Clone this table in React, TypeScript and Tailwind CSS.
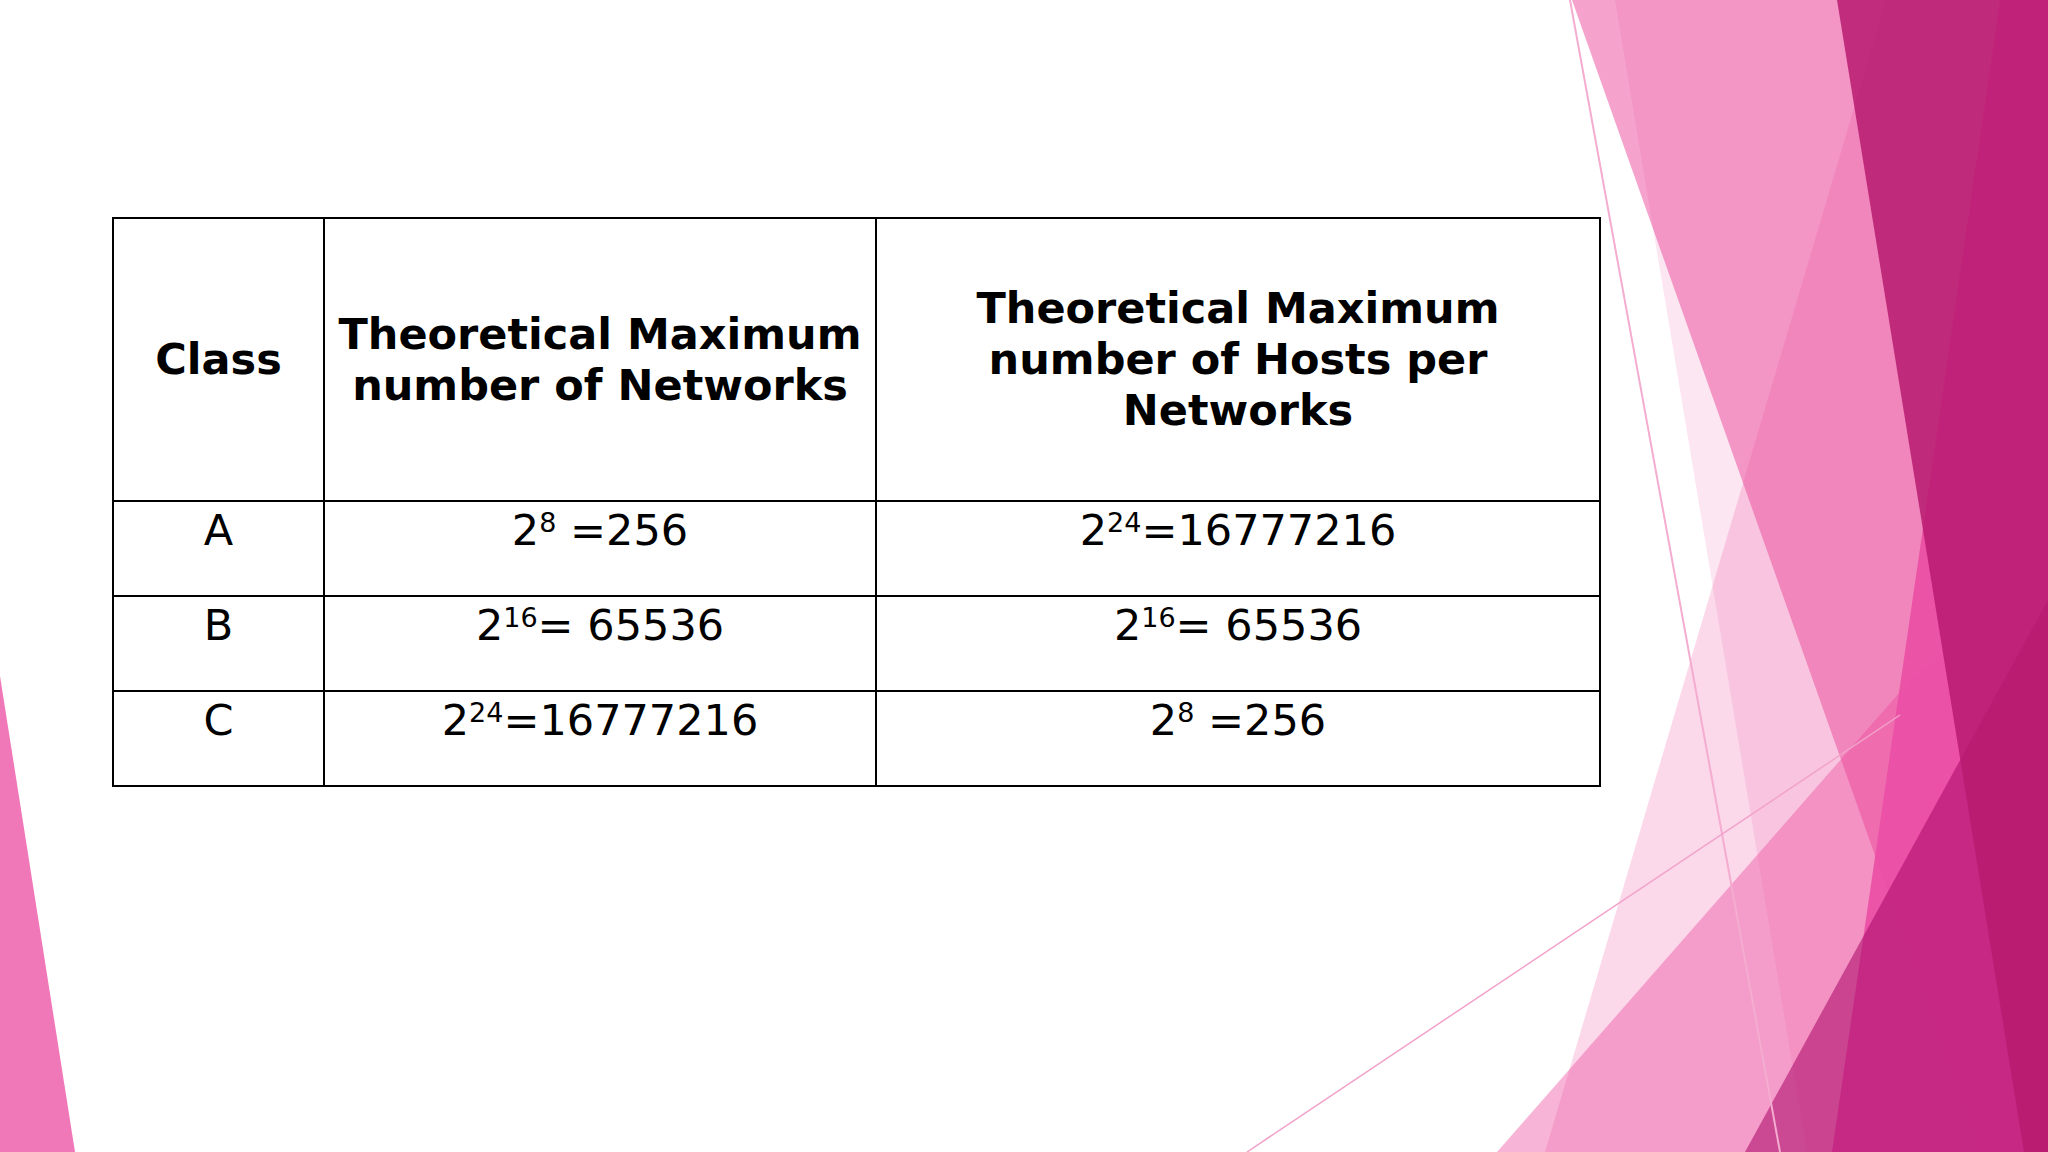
import type { ReactNode } from "react";

const Pow = ({ exp }: { exp: string }) => (
  <>
    2<sup className="text-[27px]">{exp}</sup>
  </>
);

type Row = { cls: string; nets: ReactNode; hosts: ReactNode };

const ROWS: Row[] = [
  {
    cls: "A",
    nets: (
      <>
        <Pow exp="8" /> =256
      </>
    ),
    hosts: (
      <>
        <Pow exp="24" />
        =16777216
      </>
    ),
  },
  {
    cls: "B",
    nets: (
      <>
        <Pow exp="16" />= 65536
      </>
    ),
    hosts: (
      <>
        <Pow exp="16" />= 65536
      </>
    ),
  },
  {
    cls: "C",
    nets: (
      <>
        <Pow exp="24" />
        =16777216
      </>
    ),
    hosts: (
      <>
        <Pow exp="8" /> =256
      </>
    ),
  },
];

const Facets = () => (
  <svg
    className="absolute inset-0 w-full h-full pointer-events-none"
    viewBox="0 0 2048 1152"
    preserveAspectRatio="none"
  >
    <polygon points="0,676 75,1152 0,1152" fill="#F178B8" />
    <polygon points="1572,0 2048,0 2048,1152 1980,1152" fill="#EC4C9E" fillOpacity={0.52} />
    <polygon points="1615,0 2048,0 2048,1152 1807,1152" fill="#EC4C9E" fillOpacity={0.14} />
    <polygon points="1886,0 2048,0 2048,1152 1545,1152" fill="#EC4C9E" fillOpacity={0.22} />
    <polygon points="1497,1152 1907,684 2048,560 2048,1152" fill="#EC4C9E" fillOpacity={0.42} />
    <polygon points="2000,0 2048,0 2048,1152 1832,1152" fill="#EA4FA5" fillOpacity={0.92} />
    <polygon points="2048,600 2048,1152 1745,1152" fill="#AA0869" fillOpacity={0.57} />
    <polygon points="1837,0 2048,0 2048,1152 2024,1152" fill="#B71A70" fillOpacity={0.85} />
    <line x1="1570" y1="0" x2="1780" y2="1152" stroke="#F4ACD0" strokeWidth={2} />
    <line x1="1247" y1="1152" x2="1900" y2="715" stroke="#F2A2CA" strokeWidth={1.5} />
  </svg>
);

const cell = "border-2 border-black text-center";

const App = () => {
  return (
    <div className="relative w-[2048px] h-[1152px] overflow-hidden bg-white font-['DejaVu_Sans',Verdana,sans-serif] text-black">
      <Facets />
      <div className="relative pt-[217px] pl-[112px]">
        <table className="table-fixed border-collapse w-[1487px]">
          <colgroup>
            <col className="w-[211px]" />
            <col className="w-[552px]" />
            <col className="w-[724px]" />
          </colgroup>
          <thead>
            <tr className="h-[283px]">
              <th className={`${cell} align-middle px-1 font-bold text-[43px] leading-[51px]`}>
                Class
              </th>
              <th className={`${cell} align-middle px-1 font-bold text-[43px] leading-[51px]`}>
                Theoretical Maximum
                <br />
                number of Networks
              </th>
              <th className={`${cell} align-middle px-1 font-bold text-[43px] leading-[51px]`}>
                Theoretical Maximum
                <br />
                number of Hosts per
                <br />
                Networks
              </th>
            </tr>
          </thead>
          <tbody>
            {ROWS.map(({ cls, nets, hosts }) => (
              <tr key={cls} className="h-[95px]">
                <td className={`${cell} align-top pt-[3px] text-[43px] leading-[50px]`}>{cls}</td>
                <td className={`${cell} align-top pt-[3px] text-[43px] leading-[50px]`}>{nets}</td>
                <td className={`${cell} align-top pt-[3px] text-[43px] leading-[50px]`}>{hosts}</td>
              </tr>
            ))}
          </tbody>
        </table>
      </div>
    </div>
  );
};

export default App;
